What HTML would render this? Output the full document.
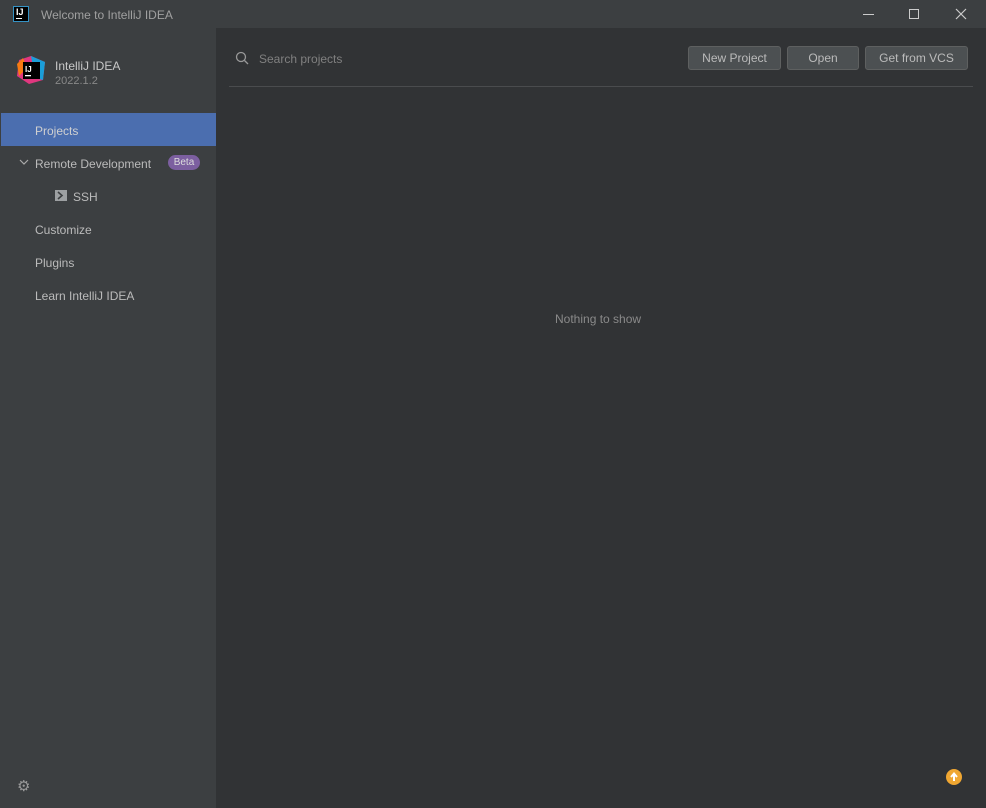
<!DOCTYPE html><html><head><style>
*{margin:0;padding:0;box-sizing:border-box}
body{width:986px;height:808px;background:#313335;font-family:"Liberation Sans",sans-serif;font-size:12px;color:#bbbbbb;position:relative;overflow:hidden}
.title{position:absolute;left:0;top:0;width:986px;height:28px;background:#3c3f41}
.side{position:absolute;left:0;top:28px;width:216px;height:780px;background:#3c3f41}
.t{position:absolute;white-space:nowrap}
.btn{position:absolute;top:46px;height:24px;border:1px solid #5e6060;border-radius:3px;background:#4c5052;color:#bbb;text-align:center;line-height:22px;font-size:12px}
</style></head><body>
<div class="title">
 <div style="position:absolute;left:13px;top:6px;width:16px;height:16px;background:#000;border:1px solid #3592c4"><span style="position:absolute;left:2px;top:0;color:#fff;font-size:9px;font-weight:bold">IJ</span><div style="position:absolute;left:2px;bottom:2px;width:6px;height:1px;background:#fff"></div></div>
 <div class="t" style="left:41px;top:8px;color:#a0a0a0">Welcome to IntelliJ IDEA</div>
 <div style="position:absolute;left:863px;top:14px;width:11px;height:1px;background:#ccc"></div>
 <div style="position:absolute;left:909px;top:9px;width:10px;height:10px;border:1px solid #ccc"></div>
 <svg style="position:absolute;left:955px;top:8px" width="12" height="12"><path d="M1 1L11 11M11 1L1 11" stroke="#ccc" stroke-width="1.2"/></svg>
</div>
<div class="side">
 <svg style="position:absolute;left:17px;top:28px" width="28" height="28"><polygon points="2,4 14,0 28,6 26,24 12,28 0,20" fill="#e0377f"/><polygon points="14,0 28,6 26,24 18,22" fill="#1a9ed9"/><polygon points="0,8 6,2 10,12 2,20" fill="#f97a12"/><rect x="6" y="6" width="17" height="17" fill="#000"/><text x="8" y="16" fill="#fff" font-size="8" font-weight="bold" font-family="Liberation Sans">IJ</text><rect x="8" y="19" width="6" height="1.3" fill="#fff"/></svg>
 <div class="t" style="left:55px;top:31px;color:#c8c8c8">IntelliJ IDEA</div>
 <div class="t" style="left:55px;top:47px;color:#888;font-size:11px">2022.1.2</div>
 <div style="position:absolute;left:1px;top:85px;width:215px;height:33px;background:#4b6eaf"></div>
 <div class="t" style="left:35px;top:96px;color:#d0d0d0">Projects</div>
 <svg style="position:absolute;left:19px;top:130px" width="10" height="8"><path d="M1 2L5 6L9 2" stroke="#aaa" fill="none" stroke-width="1.2"/></svg>
 <div class="t" style="left:35px;top:129px">Remote Development</div>
 <div class="t" style="left:168px;top:127px;width:32px;height:15px;border-radius:8px;background:#7c5fa0;color:#ddd;font-size:10px;text-align:center;line-height:15px">Beta</div>
 <div style="position:absolute;left:55px;top:162px;width:12px;height:11px;background:#9da0a2"><svg width="12" height="11"><path d="M3 2L7 5.5L3 9" stroke="#3c3f41" fill="none" stroke-width="1.6"/></svg></div>
 <div class="t" style="left:73px;top:162px">SSH</div>
 <div class="t" style="left:35px;top:195px">Customize</div>
 <div class="t" style="left:35px;top:228px">Plugins</div>
 <div class="t" style="left:35px;top:261px">Learn IntelliJ IDEA</div>
 <div class="t" style="left:17px;top:749px;color:#999;font-size:15px">⚙</div>
</div>
<svg style="position:absolute;left:235px;top:51px" width="14" height="14"><circle cx="6" cy="6" r="4.5" stroke="#999" fill="none" stroke-width="1.3"/><path d="M9.5 9.5L13 13" stroke="#999" stroke-width="1.3"/></svg>
<div class="t" style="left:259px;top:52px;color:#808080">Search projects</div>
<div class="btn" style="left:688px;width:93px">New Project</div>
<div class="btn" style="left:787px;width:72px">Open</div>
<div class="btn" style="left:865px;width:103px">Get from VCS</div>
<div style="position:absolute;left:229px;top:86px;width:744px;height:1px;background:#4a4c4e"></div>
<div class="t" style="left:555px;top:312px;color:#8a8a8a">Nothing to show</div>
<div style="position:absolute;left:946px;top:769px;width:16px;height:16px;border-radius:50%;background:#f0a732"><svg width="16" height="16"><path d="M8 12V5M5 8L8 4.5L11 8" stroke="#fff" stroke-width="2" fill="none"/></svg></div>
</body></html>
